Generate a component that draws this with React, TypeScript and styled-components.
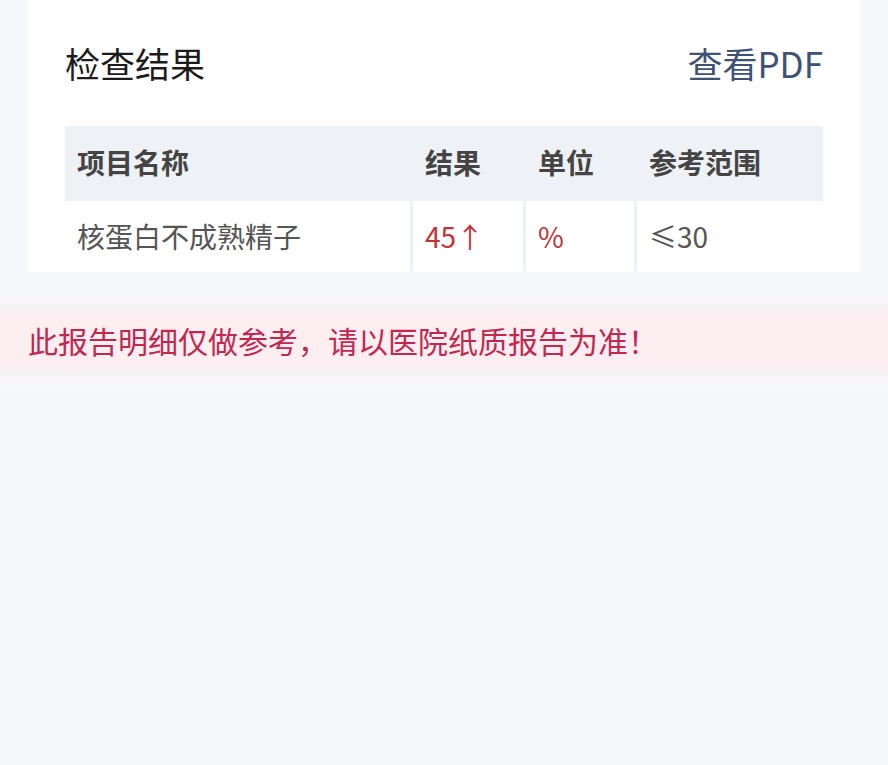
import React from 'react';
import styled, { createGlobalStyle } from 'styled-components';

const GlobalStyle = createGlobalStyle`
  html, body {
    margin: 0;
    padding: 0;
    background: #f5f7fa;
    font-family: "Noto Sans CJK SC", "Noto Sans", sans-serif;
  }
`;

const Page = styled.div`
  width: 888px;
  height: 765px;
  background: #f5f7fa;
  overflow: hidden;
`;

const Card = styled.section`
  margin: 0 28px;
  height: 272px;
  padding: 0 37px;
  box-sizing: border-box;
  background: #fff;
`;

const Header = styled.div`
  display: flex;
  justify-content: space-between;
  align-items: center;
  height: 126px;
  padding-bottom: 2px;
  box-sizing: border-box;
`;

const Title = styled.h2`
  margin: 0;
  font-size: 35px;
  font-weight: 400;
  color: #1c1c1c;
`;

const PdfLink = styled.a`
  font-size: 35px;
  color: #3d5275;
  text-decoration: none;
`;

const Table = styled.div`
  display: grid;
  grid-template-columns: 345px 110px 108px 1fr;
  gap: 3px;
  background: #eef1f5;
`;

const Cell = styled.div<{ $head?: boolean; $tone?: 'red' | 'plain' }>`
  height: ${(p) => (p.$head ? '72px' : '70px')};
  display: flex;
  align-items: center;
  padding-left: 12px;
  background: ${(p) => (p.$head ? '#eef1f5' : '#fff')};
  font-size: 28px;
  font-weight: ${(p) => (p.$head ? 700 : 400)};
  color: ${(p) => (p.$head ? '#444' : p.$tone === 'red' ? '#c0333d' : '#555')};
`;

const Notice = styled.div`
  margin-top: 20px;
  padding: 26px 28px;
  background: linear-gradient(
    to bottom,
    rgba(253, 236, 241, 0) 0%,
    #fdeef2 30%,
    #fdeef2 70%,
    rgba(253, 236, 241, 0) 100%
  );
  font-size: 30px;
  color: #c2284f;
`;

export default function App() {
  return (
    <Page>
      <GlobalStyle />
      <Card>
        <Header>
          <Title>检查结果</Title>
          <PdfLink href="#">查看PDF</PdfLink>
        </Header>
        <Table>
          <Cell $head>项目名称</Cell>
          <Cell $head>结果</Cell>
          <Cell $head>单位</Cell>
          <Cell $head>参考范围</Cell>
          <Cell>核蛋白不成熟精子</Cell>
          <Cell $tone="red">45↑</Cell>
          <Cell $tone="red">%</Cell>
          <Cell>≤30</Cell>
        </Table>
      </Card>
      <Notice>此报告明细仅做参考，请以医院纸质报告为准！</Notice>
    </Page>
  );
}
